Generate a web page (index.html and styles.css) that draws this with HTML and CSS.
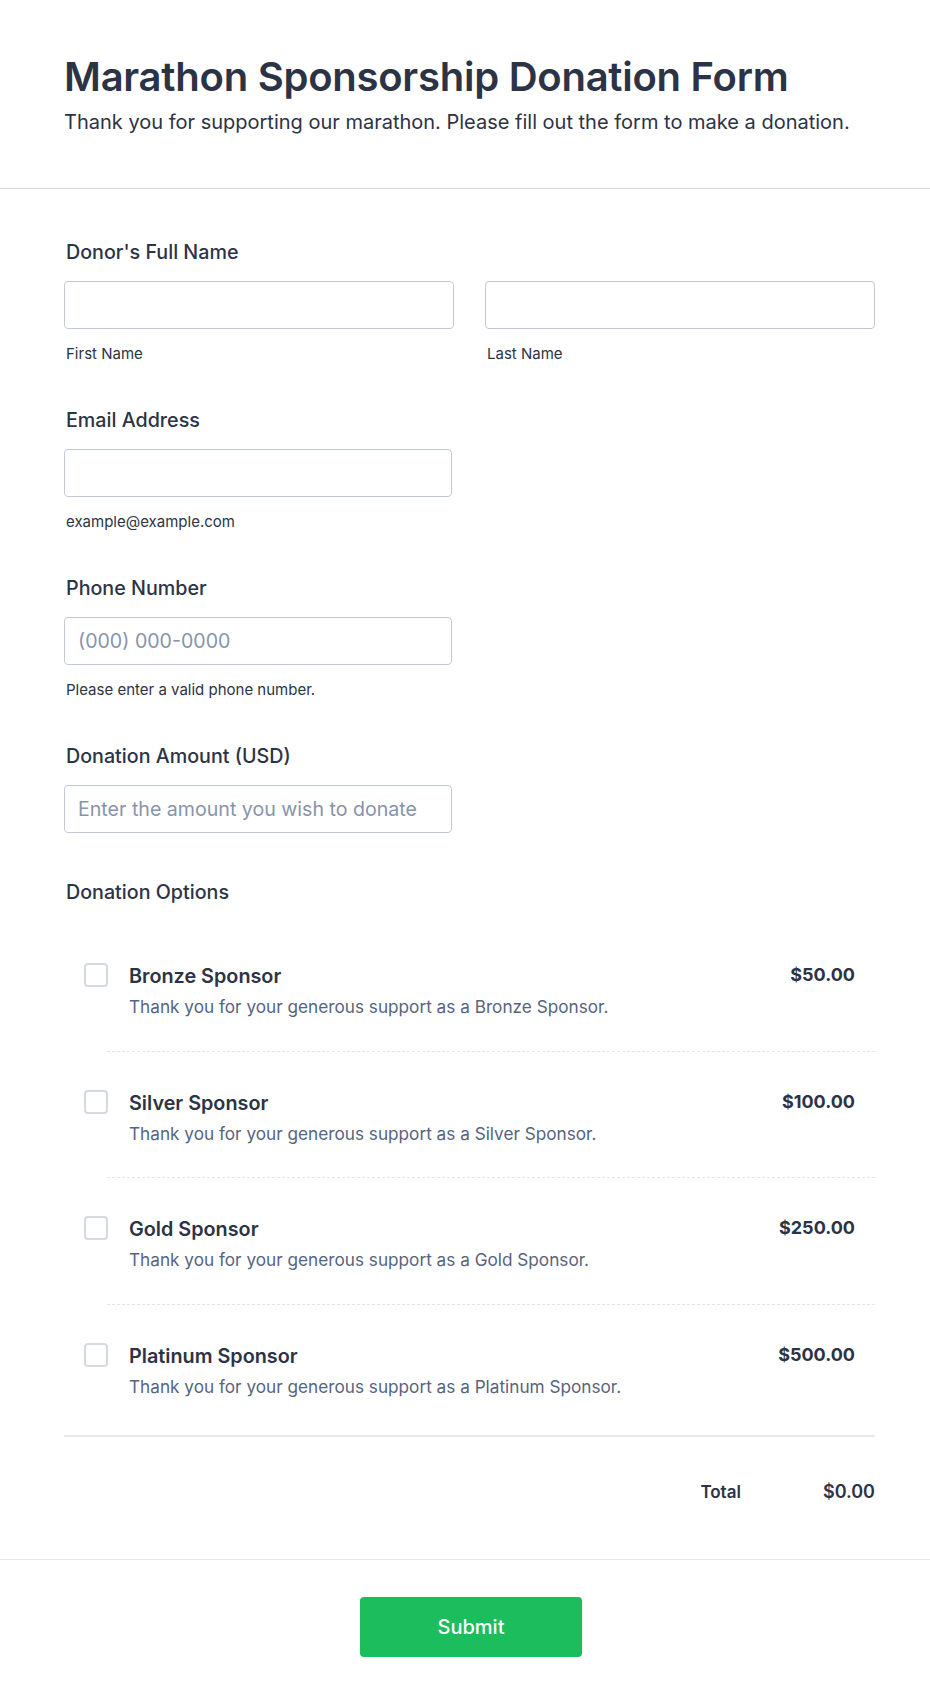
FILE: index.html
```html
<!DOCTYPE html>
<html lang="en">
<head>
    <meta charset="UTF-8">
    <title>Marathon Sponsorship Donation Form</title>
    <link rel="stylesheet" href="styles.css">
</head>
<body>
    <div class="header">
        <h1>Marathon Sponsorship Donation Form</h1>
        <p>Thank you for supporting our marathon. Please fill out the form to make a donation.</p>
    </div>
    <form class="form">
        <div class="field">
            <label class="label">Donor's Full Name</label>
            <div class="name-row">
                <div>
                    <input class="text" type="text">
                    <div class="sublabel">First Name</div>
                </div>
                <div>
                    <input class="text" type="text">
                    <div class="sublabel">Last Name</div>
                </div>
            </div>
        </div>
        <div class="field">
            <label class="label">Email Address</label>
            <input class="text short" type="email">
            <div class="sublabel">example@example.com</div>
        </div>
        <div class="field">
            <label class="label">Phone Number</label>
            <input class="text short" type="tel" placeholder="(000) 000-0000">
            <div class="sublabel">Please enter a valid phone number.</div>
        </div>
        <div class="field field-last">
            <label class="label">Donation Amount (USD)</label>
            <input class="text short" type="text" placeholder="Enter the amount you wish to donate">
        </div>
        <div class="label">Donation Options</div>
        <ul class="options">
            <li>
                <div class="check"><input type="checkbox"></div>
                <div class="option-body">
                    <div class="option-text">
                        <div class="option-name">Bronze Sponsor</div>
                        <div class="option-desc">Thank you for your generous support as a Bronze Sponsor.</div>
                    </div>
                    <div class="price">$50.00</div>
                </div>
            </li>
            <li>
                <div class="check"><input type="checkbox"></div>
                <div class="option-body">
                    <div class="option-text">
                        <div class="option-name">Silver Sponsor</div>
                        <div class="option-desc">Thank you for your generous support as a Silver Sponsor.</div>
                    </div>
                    <div class="price">$100.00</div>
                </div>
            </li>
            <li>
                <div class="check"><input type="checkbox"></div>
                <div class="option-body">
                    <div class="option-text">
                        <div class="option-name">Gold Sponsor</div>
                        <div class="option-desc">Thank you for your generous support as a Gold Sponsor.</div>
                    </div>
                    <div class="price">$250.00</div>
                </div>
            </li>
            <li>
                <div class="check"><input type="checkbox"></div>
                <div class="option-body">
                    <div class="option-text">
                        <div class="option-name">Platinum Sponsor</div>
                        <div class="option-desc">Thank you for your generous support as a Platinum Sponsor.</div>
                    </div>
                    <div class="price">$500.00</div>
                </div>
            </li>
        </ul>
        <div class="total">
            <span class="total-label">Total</span>
            <span class="total-value">$0.00</span>
        </div>
    </form>
    <div class="footer">
        <button class="submit" type="button">Submit</button>
    </div>
</body>
</html>
```
FILE: styles.css
```css
*{
    margin: 0;
    padding: 0;
    box-sizing: border-box;
}
body{
    font-family: Inter, "Noto Sans", sans-serif;
    color: #2c3345;
    background: #fff;
}
ul{
    list-style: none;
}
.header{
    padding: 53px 64px 52px;
    border-bottom: 1px solid #d8dae6;
}
.header h1{
    font-size: 40px;
    line-height: 48px;
    font-weight: 600;
    letter-spacing: -0.25px;
}
.header p{
    margin-top: 7px;
    font-size: 20px;
    line-height: 28px;
}
.form{
    padding: 51px 55px 0 64px;
}
.field{
    margin-bottom: 44px;
}
.field-last{
    margin-bottom: 47px;
}
.label{
    display: block;
    padding-left: 2px;
    font-size: 19.7px;
    line-height: 24px;
    font-weight: 500;
}
.name-row{
    display: grid;
    grid-template-columns: 1fr 1fr;
    column-gap: 31px;
}
.text{
    display: block;
    width: 100%;
    height: 48px;
    margin-top: 17px;
    padding: 0 13px;
    border: 1px solid #c3c8d6;
    border-radius: 4px;
    font-family: inherit;
    font-size: 19.6px;
    color: #2c3345;
    background: #fff;
}
.text::placeholder{
    color: #8894ab;
}
.short{
    width: 388px;
}
.sublabel{
    margin-top: 15px;
    padding-left: 2px;
    font-size: 15px;
    line-height: 20px;
}
.options{
    margin-top: 21px;
}
.options li{
    display: flex;
}
.check{
    width: 43px;
    padding: 38px 0 0 20px;
}
.check input{
    appearance: none;
    -webkit-appearance: none;
    display: block;
    width: 24px;
    height: 24px;
    border: 2px solid #d5d9e3;
    border-radius: 4px;
    background: #fff;
}
.option-body{
    flex: 1;
    display: flex;
    justify-content: space-between;
    padding: 39px 20px 31.5px 22px;
    border-bottom: 1px dashed #e3e5ee;
}
.options li:last-child .option-body{
    border-bottom: none;
    padding-bottom: 36px;
}
.option-name{
    font-size: 19.8px;
    line-height: 24px;
    font-weight: 600;
}
.option-desc{
    margin-top: 7px;
    font-size: 17.2px;
    line-height: 24px;
    color: #57647e;
}
.price{
    font-size: 18px;
    line-height: 22px;
    font-weight: 700;
}
.total{
    display: flex;
    justify-content: flex-end;
    align-items: baseline;
    gap: 82px;
    padding: 43px 0 55px;
    border-top: 2px solid #e8e9ef;
}
.total-label{
    font-size: 17px;
    line-height: 24px;
    font-weight: 600;
}
.total-value{
    font-size: 18px;
    line-height: 24px;
    font-weight: 600;
}
.footer{
    display: flex;
    justify-content: center;
    padding: 37px 0 49px 12px;
    border-top: 1px solid #e8e9ef;
}
.submit{
    width: 222px;
    height: 60px;
    border: none;
    border-radius: 4px;
    background: #1bbd5d;
    color: #fff;
    font-family: inherit;
    font-size: 20px;
    font-weight: 500;
    cursor: pointer;
}
```
